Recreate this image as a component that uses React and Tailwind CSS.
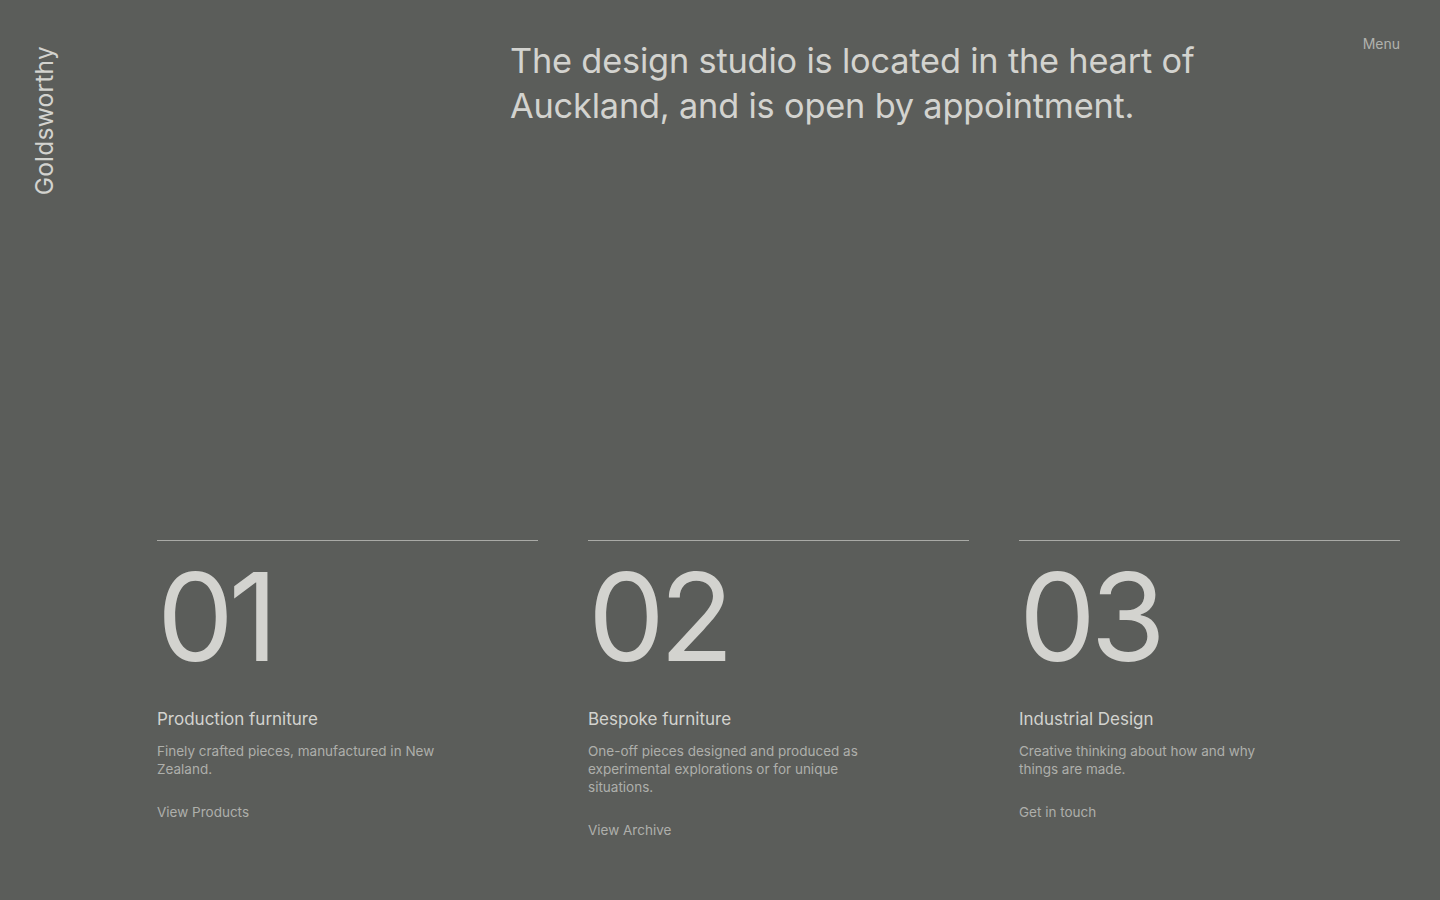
const services = [
  {
    num: "01",
    title: "Production furniture",
    text: "Finely crafted pieces, manufactured in New Zealand.",
    link: "View Products",
  },
  {
    num: "02",
    title: "Bespoke furniture",
    text: "One-off pieces designed and produced as experimental explorations or for unique situations.",
    link: "View Archive",
  },
  {
    num: "03",
    title: "Industrial Design",
    text: "Creative thinking about how and why things are made.",
    link: "Get in touch",
  },
];

export default function App() {
  return (
    <div
      className="relative min-h-[900px] w-full bg-[#5b5d5a] text-[#d3d3cf]"
      style={{ fontFamily: "Inter, 'Liberation Sans', sans-serif" }}
    >
      {/* Top row */}
      <header className="flex items-start px-10 pt-[38px]">
        <div className="w-[470px] shrink-0">
          <a
            href="#"
            className="absolute left-[30px] top-[46px] block text-[24.5px] leading-[28px] tracking-[0.01em] text-[#d3d3cf] [writing-mode:vertical-rl] rotate-180"
          >
            Goldsworthy
          </a>
        </div>
        <h1 className="w-[720px] text-[34.3px] font-normal leading-[45px] tracking-[-0.005em] text-[#d3d3cf]">
          The design studio is located in the heart of Auckland, and is open by appointment.
        </h1>
        <a href="#" className="ml-auto mt-[1px] text-[14px] leading-[10px] text-[#b1b2ae]">
          Menu
        </a>
      </header>

      {/* Services */}
      <section className="ml-[157px] mr-10 mt-[412px] grid grid-cols-3 gap-[50px]">
        {services.map((s) => (
          <div key={s.num} className="border-t border-[#a9aaa6]">
            <div className="mt-[14px] text-[122px] leading-[124px] tracking-[-0.045em] text-[#d3d3cf]">
              {s.num}
            </div>
            <h2 className="mt-[29px] text-[17px] leading-[22px] text-[#d3d3cf]">{s.title}</h2>
            <p className="mt-[12px] max-w-[278px] text-[13.5px] leading-[18px] text-[#aeafab]">
              {s.text}
            </p>
            <a href="#" className="mt-[25px] block text-[13.5px] leading-[18px] text-[#aeafab]">
              {s.link}
            </a>
          </div>
        ))}
      </section>
    </div>
  );
}
